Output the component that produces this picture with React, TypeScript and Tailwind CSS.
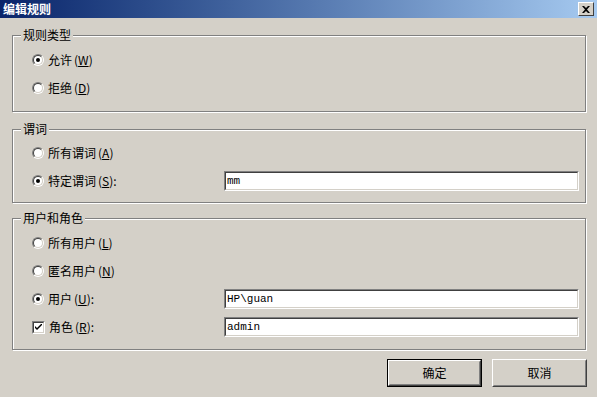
import React from "react";

const cjk = { fontFamily: '"Noto Sans CJK SC", "Liberation Sans", sans-serif' };

function Radio({ checked }: { checked?: boolean }) {
  return (
    <div className="w-[12px] h-[12px] rounded-full border border-t-[#808080] border-l-[#808080] border-b-white border-r-white shrink-0">
      <div className="w-full h-full rounded-full border border-t-[#404040] border-l-[#404040] border-b-[#d4d0c8] border-r-[#d4d0c8] bg-white flex items-center justify-center">
        {checked && <div className="w-[4px] h-[4px] rounded-full bg-black" />}
      </div>
    </div>
  );
}

function Check({ checked }: { checked?: boolean }) {
  return (
    <div className="w-[13px] h-[13px] border border-t-[#808080] border-l-[#808080] border-b-white border-r-white shrink-0">
      <div className="w-full h-full border border-t-[#404040] border-l-[#404040] border-b-[#d4d0c8] border-r-[#d4d0c8] bg-white flex items-center justify-center">
        {checked && (
          <svg width="7" height="7" viewBox="0 0 7 7">
            <path d="M0 2 L0 4 L2 6 L7 1 L7 -1 L2 4 Z" fill="#000" />
          </svg>
        )}
      </div>
    </div>
  );
}

function Label({ text, k, colon }: { text: string; k: string; colon?: boolean }) {
  return (
    <span className="text-[12px] text-black leading-none" style={cjk}>
      {text}
      <span className="ml-[2px]">(<u>{k}</u>){colon ? ":" : ""}</span>
    </span>
  );
}

function Input({ value }: { value: string }) {
  return (
    <div className="w-[355px] h-[20px] border border-t-[#808080] border-l-[#808080] border-b-white border-r-white">
      <div className="w-full h-full border border-t-[#404040] border-l-[#404040] border-b-[#d4d0c8] border-r-[#d4d0c8] bg-white flex items-center pl-[1px]">
        <span className="text-[11px] text-black leading-none" style={{ fontFamily: '"Liberation Mono", monospace' }}>
          {value}
        </span>
      </div>
    </div>
  );
}

function Row({
  kind,
  checked,
  text,
  k,
  value,
}: {
  kind: "radio" | "check";
  checked?: boolean;
  text: string;
  k: string;
  value?: string;
}) {
  return (
    <div className="h-[28px] flex items-center">
      <div className="w-[192px] flex items-center gap-[4px]">
        {kind === "radio" ? <Radio checked={checked} /> : <Check checked={checked} />}
        <Label text={text} k={k} colon={value !== undefined} />
      </div>
      {value !== undefined && <Input value={value} />}
    </div>
  );
}

function Group({ title, className, children }: { title: string; className: string; children: React.ReactNode }) {
  return (
    <div
      className={`relative ml-[12px] w-[574px] border border-[#808080] shadow-[inset_1px_1px_0_#fff,1px_1px_0_#fff] pl-[19px] ${className}`}
    >
      <span
        className="absolute left-[8px] top-[-8px] px-[2px] bg-[#d4d0c8] text-[12px] leading-[14px] text-black"
        style={cjk}
      >
        {title}
      </span>
      {children}
    </div>
  );
}

function Button({ children, isDefault }: { children: React.ReactNode; isDefault?: boolean }) {
  const inner = (
    <div className="w-full h-full border border-t-white border-l-white border-b-[#404040] border-r-[#404040]">
      <div className="w-full h-full border border-t-[#d4d0c8] border-l-[#d4d0c8] border-b-[#808080] border-r-[#808080] flex items-center justify-center">
        <span className="text-[12px] text-black leading-none" style={cjk}>
          {children}
        </span>
      </div>
    </div>
  );
  return isDefault ? (
    <div className="w-[95px] h-[28px] border border-black">{inner}</div>
  ) : (
    <div className="w-[95px] h-[28px]">{inner}</div>
  );
}

export default function App() {
  return (
    <div className="w-[597px] h-[397px] bg-[#d4d0c8] flex flex-col overflow-hidden">
      <div className="h-[18px] bg-gradient-to-r from-[#0a246a] to-[#a6caf0] flex items-center justify-between pl-[3px] pr-[3px]">
        <span className="text-[12px] font-bold text-white leading-none" style={cjk}>
          编辑规则
        </span>
        <div className="w-[16px] h-[14px] bg-[#d4d0c8] border border-t-white border-l-white border-b-[#404040] border-r-[#404040] flex items-center justify-center">
          <svg width="8" height="7" viewBox="0 0 8 7">
            <path d="M0 0 L2 0 L4 2 L6 0 L8 0 L5 3.5 L8 7 L6 7 L4 5 L2 7 L0 7 L3 3.5 Z" fill="#000" />
          </svg>
        </div>
      </div>

      <Group title="规则类型" className="mt-[17px] pt-[10px] pb-[9px]">
        <Row kind="radio" checked text="允许" k="W" />
        <Row kind="radio" text="拒绝" k="D" />
      </Group>

      <Group title="谓词" className="mt-[17px] pt-[9px] pb-[7px]">
        <Row kind="radio" text="所有谓词" k="A" />
        <Row kind="radio" checked text="特定谓词" k="S" value="mm" />
      </Group>

      <Group title="用户和角色" className="mt-[15px] pt-[10px] pb-[8px]">
        <Row kind="radio" text="所有用户" k="L" />
        <Row kind="radio" text="匿名用户" k="N" />
        <Row kind="radio" checked text="用户" k="U" value="HP\guan" />
        <Row kind="check" checked text="角色" k="R" value="admin" />
      </Group>

      <div className="mt-[9px] flex justify-end gap-[10px] pr-[10px]">
        <Button isDefault>确定</Button>
        <Button>取消</Button>
      </div>
    </div>
  );
}
